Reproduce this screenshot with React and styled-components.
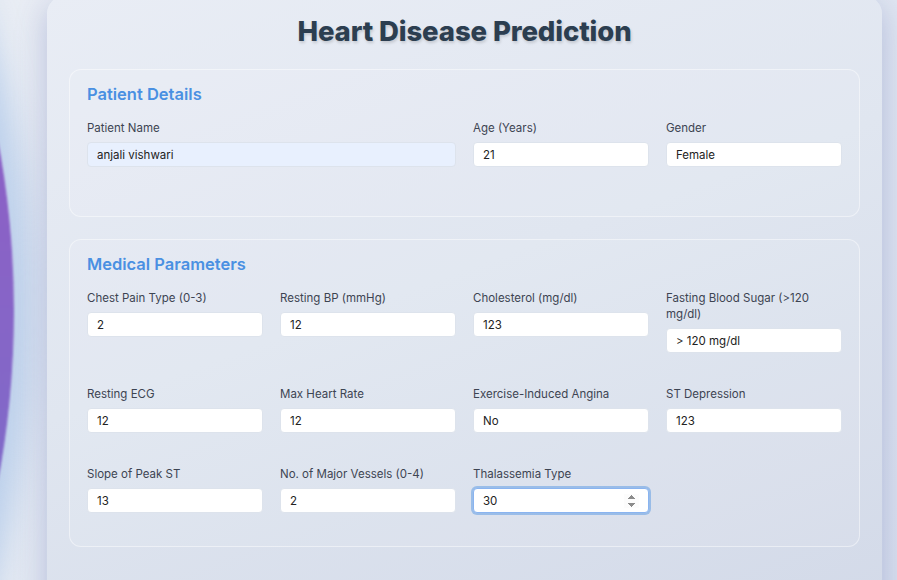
import React from 'react'
import styled, { createGlobalStyle } from 'styled-components'

const GlobalStyle = createGlobalStyle`
  html, body {
    margin: 0;
    padding: 0;
    height: 100%;
    overflow: hidden;
  }
  body {
    font-family: Inter, "Noto Sans", sans-serif;
    background: linear-gradient(135deg, #e9edf4 0%, #e2e8f2 50%, #d9e0ee 100%);
  }
`

const patientFields = [
  { label: 'Patient Name', value: 'anjali vishwari', wide: true, filled: true },
  { label: 'Age (Years)', value: '21' },
  { label: 'Gender', value: 'Female' },
]

const medicalFields = [
  { label: 'Chest Pain Type (0-3)', value: '2' },
  { label: 'Resting BP (mmHg)', value: '12' },
  { label: 'Cholesterol (mg/dl)', value: '123' },
  { label: 'Fasting Blood Sugar (>120 mg/dl)', value: '> 120 mg/dl' },
  { label: 'Resting ECG', value: '12' },
  { label: 'Max Heart Rate', value: '12' },
  { label: 'Exercise-Induced Angina', value: 'No' },
  { label: 'ST Depression', value: '123' },
  { label: 'Slope of Peak ST', value: '13' },
  { label: 'No. of Major Vessels (0-4)', value: '2' },
  { label: 'Thalassemia Type', value: '30', number: true, focus: true },
]

function Field({ field }) {
  return (
    <FormGroup $wide={field.wide}>
      <Label>{field.label}</Label>
      <Input
        type={field.number ? 'number' : 'text'}
        defaultValue={field.value}
        autoFocus={field.focus}
        $filled={field.filled}
      />
    </FormGroup>
  )
}

function App() {
  return (
    <>
      <GlobalStyle />
      <Page>
        <Blob />
        <Card>
          <Title>Heart Disease Prediction</Title>
          <Section $bottom={49}>
            <SectionTitle>Patient Details</SectionTitle>
            <Grid>
              {patientFields.map((f) => (
                <Field key={f.label} field={f} />
              ))}
            </Grid>
          </Section>
          <Section $bottom={33}>
            <SectionTitle>Medical Parameters</SectionTitle>
            <Grid>
              {medicalFields.map((f) => (
                <Field key={f.label} field={f} />
              ))}
            </Grid>
          </Section>
        </Card>
      </Page>
    </>
  )
}

const Page = styled.div`
  position: relative;
  height: 580px;
  overflow: hidden;
`

const Blob = styled.div`
  position: absolute;
  left: -1828px;
  top: -610px;
  width: 1842px;
  height: 1842px;
  border-radius: 50%;
  background: linear-gradient(180deg, #9358c4 0%, #8a62c6 45%, #7573cc 75%, #8b92d6 100%);
  box-shadow: 0 0 30px 18px rgba(170, 196, 232, 0.7);
  filter: blur(1px);
`

const Card = styled.div`
  position: relative;
  margin-left: 47px;
  margin-top: -4px;
  width: 835px;
  height: 640px;
  box-sizing: border-box;
  padding: 18px 22px;
  border-radius: 18px;
  background: linear-gradient(160deg, #e9edf5 0%, #e0e6f0 45%, #d2d9e8 100%);
  box-shadow: 0 8px 32px rgba(60, 76, 160, 0.28);
`

const Title = styled.h1`
  margin: 0 0 21px;
  text-align: center;
  font-size: 27.5px;
  line-height: 34px;
  font-weight: 800;
  color: #2c3e50;
  letter-spacing: -0.1px;
  text-shadow: 1px 2px 3px rgba(0, 0, 0, 0.15);
`

const Section = styled.div`
  border: 1px solid rgba(255, 255, 255, 0.45);
  border-radius: 12px;
  background: rgba(255, 255, 255, 0.08);
  padding: 13px 17px ${(p) => p.$bottom}px;
  margin-bottom: 22px;
`

const SectionTitle = styled.h2`
  margin: 0 0 15px;
  font-size: 16.5px;
  line-height: 22px;
  font-weight: 600;
  color: #4a90e2;
`

const Grid = styled.div`
  display: grid;
  grid-template-columns: repeat(4, 1fr);
  column-gap: 17px;
  row-gap: 33px;
  align-items: start;
`

const FormGroup = styled.div`
  display: flex;
  flex-direction: column;
  grid-column: ${(p) => (p.$wide ? 'span 2' : 'auto')};
`

const Label = styled.label`
  font-size: 11.5px;
  line-height: 16px;
  color: #3d4452;
  margin-bottom: 6px;
`

const Input = styled.input`
  box-sizing: border-box;
  height: 25px;
  width: 100%;
  padding: 0 9px;
  border: 1px solid #dde3ec;
  border-radius: 4px;
  background: ${(p) => (p.$filled ? '#e8f0fe' : '#ffffff')};
  font-family: Inter, "Noto Sans", sans-serif;
  font-size: 11.5px;
  color: #222;
  outline: none;

  &:focus {
    border-color: #8ab4f0;
    box-shadow: 0 0 0 2px rgba(74, 144, 226, 0.45);
  }
`

export default App
